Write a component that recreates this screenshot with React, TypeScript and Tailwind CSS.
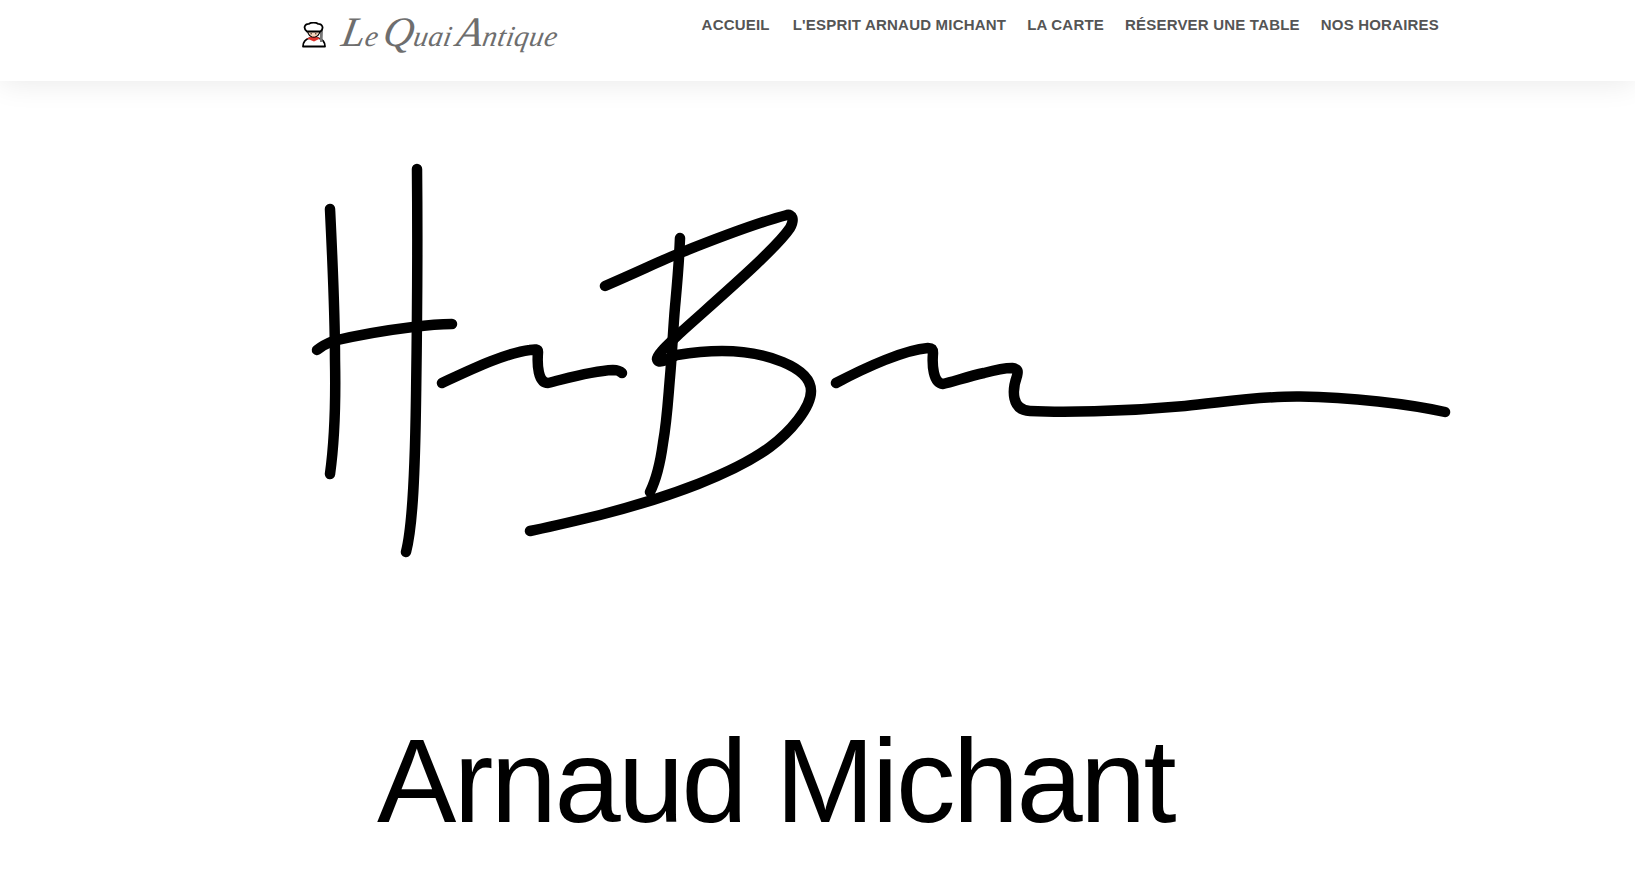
const sans = "font-['Liberation_Sans',Arial,sans-serif]";

function Chef() {
  return (
    <svg width="24" height="26" viewBox="0 0 24 26" className="shrink-0">
      <path d="M1 24.5 C1 19.5 4 17 8 16 L16 16 C20 17 23 19.5 23 24.5 Z" fill="#fff" stroke="#000" strokeWidth="1.8" strokeLinejoin="round" />
      <path d="M5 16.5 L12 19.5 L18 16.5 L15 15 L8 15 Z" fill="#e0332b" />
      <path d="M5.5 8 C5.5 17.5 18 17.5 18 8 Z" fill="#f4d7c0" stroke="#000" strokeWidth="1.2" />
      <path d="M18 8 L21 8 L20.5 20 L18 20 Z" fill="#777" />
      <path d="M5 9.5 C0.5 6 3 1.5 7 1.8 C9 0.2 14 0.2 16 1.8 C20 1.5 22.5 6 18.5 9.5 Z" fill="#fff" stroke="#000" strokeWidth="1.8" strokeLinejoin="round" />
      <rect x="8.5" y="11" width="1.4" height="1.4" fill="#6b4a36" />
      <rect x="13" y="11" width="1.4" height="1.4" fill="#6b4a36" />
      <rect x="10" y="14" width="3" height="0.9" fill="#c9826b" />
    </svg>
  );
}

function Signature() {
  return (
    <svg viewBox="300 150 1170 420" width="1170" height="420" className="block" fill="none" stroke="#000" strokeWidth="10.5" strokeLinecap="round" strokeLinejoin="round">
      <path d="M330 209 C333 270 335 310 335 360 C336 410 334 445 330 474" />
      <path d="M417 169 C418 270 417 330 416 400 C415 470 413 525 406 552" />
      <path d="M317 350 C322 346 328 343 333 341 C350 337 380 331 413 327 C428 325 440 324 452 324" />
      <path d="M442 383 C470 370 505 353 530 350 C535 349 538 349 538 352 C537 365 538 383 548 383 C565 379 590 371 613 370 C617 370 620 371 622 373" />
      <path d="M605 286 C640 271 660 261 680 253 C715 239 760 222 787 215 C792 214 795 219 790 228 C775 250 720 297 680 333 C670 343 657 354 657 359 C658 365 668 359 677 355 C695 352 705 351 722 351 C765 351 811 367 811 391 C811 408 790 432 770 447 C735 473 670 497 600 515 C575 521 550 527 530 531" />
      <path d="M680 238 C679 265 677 285 675 307 C673 330 672 355 670 377 C668 400 667 420 663 443 C660 465 656 480 650 492" />
      <path d="M836 383 C855 373 870 366 885 360 C900 354 915 349 928 348 C933 348 933 350 933 353 C932 365 933 383 943 384 C955 381 970 376 984 373 C995 370 1005 368 1012 368 C1019 369 1018 372 1017 376 C1012 390 1011 410 1030 411 C1060 412.5 1120 412 1185 406 C1225 402 1260 396 1300 396.5 C1350 397 1410 404 1445 412" />
    </svg>
  );
}

export default function App() {
  return (
    <div className={`min-h-[870px] overflow-hidden bg-white ${sans}`}>
      <header className="flex h-[81px] items-start bg-white pl-[302px] pr-[196px] shadow-[0_2px_30px_rgba(0,0,0,0.09)]">
        <div className="mt-[22px] flex items-start gap-[16px]">
          <Chef />
          <span className="-mt-[14px] -skew-x-[10deg] font-['Liberation_Serif',serif] text-[29px] italic leading-[48px] tracking-[0.4px] text-[#6e6e6e] [word-spacing:-3px]">
            <span className="text-[42px]">L</span>e <span className="text-[42px]">Q</span>uai <span className="text-[42px]">A</span>ntique
          </span>
        </div>
        <nav className="ml-auto mt-[16px] flex gap-[21px] text-[15px] font-bold leading-[18px] tracking-[0.2px] text-[#555]">
          <a className="mr-[2px]">ACCUEIL</a>
          <a>L'ESPRIT ARNAUD MICHANT</a>
          <a>LA CARTE</a>
          <a>RÉSERVER UNE TABLE</a>
          <a>NOS HORAIRES</a>
        </nav>
      </header>
      <main className="pl-[300px] pt-[69px]">
        <Signature />
      </main>
      <h1 className="ml-[377px] pt-[145px] text-[119px] font-normal leading-[132px] tracking-[-2.6px] text-black">Arnaud Michant</h1>
    </div>
  );
}
